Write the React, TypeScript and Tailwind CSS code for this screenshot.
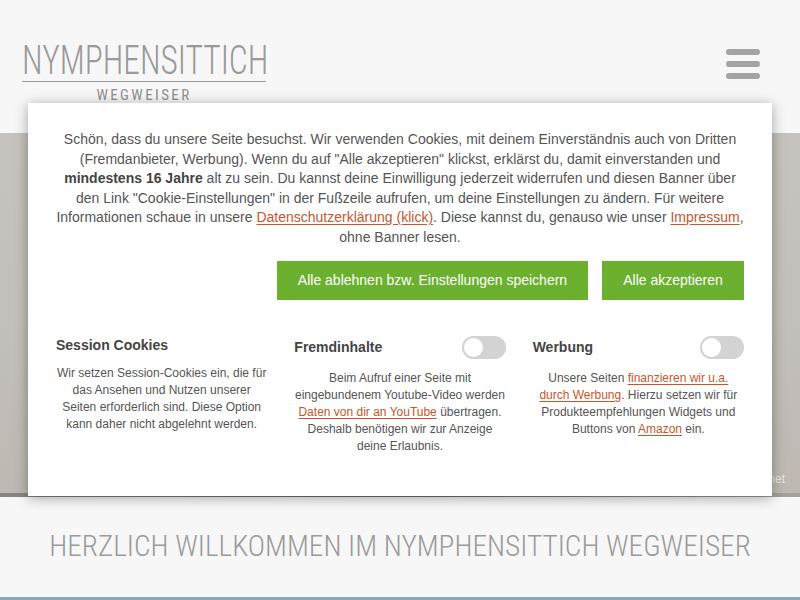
import * as React from "react";

const body = { fontFamily: '"Liberation Sans", Arial, sans-serif' };
const display = { fontFamily: "Roboto, sans-serif", fontStretch: "75%" };

function Toggle() {
  return (
    <span className="flex h-[23px] w-[44px] shrink-0 items-center rounded-full bg-[#d3d3d3] px-[2px]">
      <span className="block h-[19px] w-[19px] rounded-full bg-white" />
    </span>
  );
}

function A({ children }: { children: React.ReactNode }) {
  return (
    <a href="#" className="text-[#c8562d] underline underline-offset-2">
      {children}
    </a>
  );
}

export default function App() {
  return (
    <div className="relative min-h-[600px] w-[800px] bg-[#f7f7f7]" style={body}>
      <header className="flex h-[133px] items-start justify-between pl-[22px] pr-[40px] pt-[40px]">
        <div className="flex w-[244px] flex-col items-center">
          <div className="h-[40px] w-[244px]">
            <span
              className="inline-block origin-left scale-x-[0.816] whitespace-nowrap text-[41px] leading-[40px] font-light text-[#9a9a9a]"
              style={display}
            >
              NYMPHENSITTICH
            </span>
          </div>
          <div className="mt-[1px] h-[1px] w-full bg-[#9a9a9a]" />
          <span className="mt-[5px] text-[15px] leading-[16px] tracking-[2.4px] text-[#8f8f8f]" style={display}>
            WEGWEISER
          </span>
        </div>
        <button className="mt-[9px] flex w-[34px] flex-col gap-[6px]">
          <span className="block h-[6px] rounded-sm bg-[#a3a3a3]" />
          <span className="block h-[6px] rounded-sm bg-[#a3a3a3]" />
          <span className="block h-[6px] rounded-sm bg-[#a3a3a3]" />
        </button>
      </header>

      {/* title picture behind the banner */}
      <section className="relative h-[364px] bg-gradient-to-b from-[#c6c2bd] via-[#c3bfba] to-[#bdb8b2]">
        <div className="absolute inset-x-0 bottom-0 h-[4px] bg-gradient-to-r from-[#8a8580] via-[#6e6a64] to-[#a7a29c]" />
        <span className="absolute bottom-[9px] right-[15px] text-[12px] text-white/70">© Foto: pixelio.net</span>
      </section>

      <section className="flex h-[100px] items-center justify-center">
        <h1 className="whitespace-nowrap text-[29.3px] font-light text-[#9b9b9b]" style={display}>
          HERZLICH WILLKOMMEN IM NYMPHENSITTICH WEGWEISER
        </h1>
      </section>
      <div className="h-[3px] bg-[#8aa6ba]" />

      {/* cookie banner */}
      <div className="absolute left-[28px] top-[103px] h-[393px] w-[744px] bg-white px-[28px] pt-[27px] shadow-[0_2px_12px_rgba(0,0,0,0.35)]">
        <p className="text-center text-[14px] leading-[19.6px] text-[#555]">
          Schön, dass du unsere Seite besuchst. Wir verwenden Cookies, mit deinem Einverständnis auch von Dritten
          (Fremdanbieter, Werbung). Wenn du auf "Alle akzeptieren" klickst, erklärst du, damit einverstanden und{" "}
          <b className="text-[#444]">mindestens 16 Jahre</b> alt zu sein. Du kannst deine Einwilligung jederzeit
          widerrufen und diesen Banner über den Link "Cookie-Einstellungen" in der Fußzeile aufrufen, um deine
          Einstellungen zu ändern. Für weitere Informationen schaue in unsere <A>Datenschutzerklärung (klick)</A>.
          Diese kannst du, genauso wie unser <A>Impressum</A>, ohne Banner lesen.
        </p>

        <div className="mt-[13px] flex justify-end gap-[14px]">
          <button className="h-[39px] w-[311px] bg-[#6bb02f] text-[14px] text-white">
            Alle ablehnen bzw. Einstellungen speichern
          </button>
          <button className="h-[39px] w-[142px] bg-[#6bb02f] text-[14px] text-white">Alle akzeptieren</button>
        </div>

        <div className="mt-[36px] grid grid-cols-3 gap-[27px]">
          <div>
            <h3 className="text-[14px] leading-[19px] font-bold text-[#444]">Session Cookies</h3>
            <p className="mt-[10px] text-center text-[12px] leading-[17px] text-[#555]">
              Wir setzen Session-Cookies ein, die für das Ansehen und Nutzen unserer Seiten erforderlich sind. Diese
              Option kann daher nicht abgelehnt werden.
            </p>
          </div>
          <div>
            <div className="flex h-[23px] items-center justify-between">
              <h3 className="text-[14px] font-bold text-[#444]">Fremdinhalte</h3>
              <Toggle />
            </div>
            <p className="mt-[11px] text-center text-[12px] leading-[17px] text-[#555]">
              Beim Aufruf einer Seite mit eingebundenem Youtube-Video werden <A>Daten von dir an YouTube</A>{" "}
              übertragen. Deshalb benötigen wir zur Anzeige deine Erlaubnis.
            </p>
          </div>
          <div>
            <div className="flex h-[23px] items-center justify-between">
              <h3 className="text-[14px] font-bold text-[#444]">Werbung</h3>
              <Toggle />
            </div>
            <p className="mt-[11px] text-center text-[12px] leading-[17px] text-[#555]">
              Unsere Seiten <A>finanzieren wir u.a. durch Werbung</A>. Hierzu setzen wir für Produkteempfehlungen
              Widgets und Buttons von <A>Amazon</A> ein.
            </p>
          </div>
        </div>
      </div>
    </div>
  );
}
